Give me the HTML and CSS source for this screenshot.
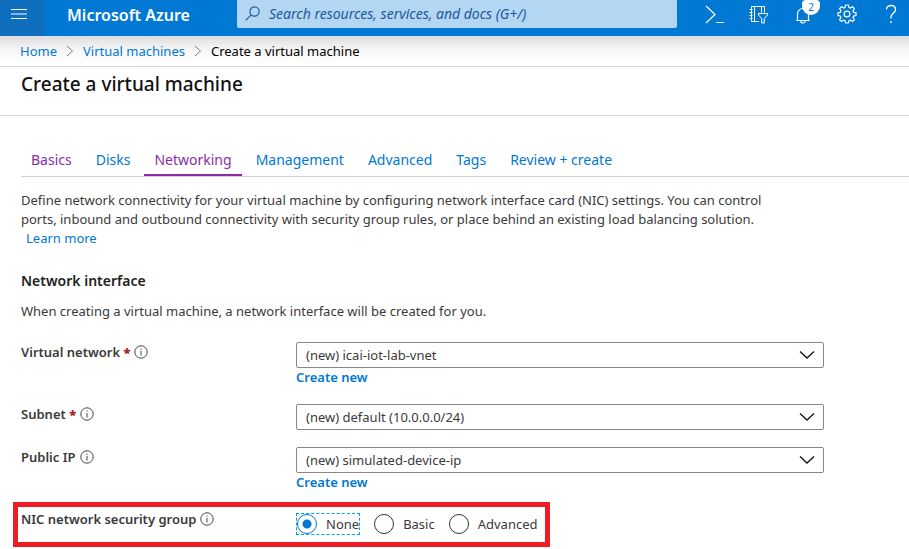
FILE: index.html
```html
<!DOCTYPE html>
<html lang="en">
<head>
<meta charset="utf-8">
<meta name="viewport" content="width=device-width, initial-scale=1">
<title>Create a virtual machine - Microsoft Azure</title>
<link rel="stylesheet" href="styles.css">
</head>
<body>
<svg class="defs" aria-hidden="true">
  <symbol id="info" viewBox="0 0 14 14"><circle cx="7" cy="7" r="6.2" fill="none" stroke="currentColor"/><path d="M7 6v4.500M7 3.500v1.200" stroke="currentColor" fill="none"/></symbol>
  <symbol id="chev" viewBox="0 0 16 10"><path d="M1 1.500l7 6.500 7-6.500" fill="none" stroke="#111" stroke-width="1.300"/></symbol>
  <symbol id="sep" viewBox="0 0 8 12"><path d="M1 1l5.500 5L1 11" fill="none" stroke="#777"/></symbol>
</svg>
<header class="topbar">
  <button class="menu" aria-label="Show portal menu"><svg width="16" height="12" viewBox="0 0 16 12"><path d="M0 1.500h16M0 10.500h16" stroke="#fff"/><path d="M0 6h16" stroke="#7fb6e6" stroke-width="2"/></svg></button>
  <a class="brand" href="#">Microsoft Azure</a>
  <div class="search">
    <svg width="15" height="15" viewBox="0 0 15 15"><circle cx="9.500" cy="5.500" r="4.600" fill="none" stroke="#1c5a99" stroke-width="1.200"/><path d="M6.200 8.800L.6 14.400" stroke="#1c5a99" stroke-width="1.200"/></svg>
    <input type="text" aria-label="Search" placeholder="Search resources, services, and docs (G+/)">
  </div>
  <nav class="tools" aria-label="Portal tools">
    <button aria-label="Cloud Shell"><svg width="20" height="20" viewBox="0 0 20 20"><path d="M1 2l9 8.500L1 19M11 18.500h8" fill="none" stroke="#fff" stroke-width="1.200"/></svg></button>
    <button aria-label="Directories and subscriptions"><svg width="20" height="20" viewBox="0 0 20 20" fill="none" stroke="#fff"><path d="M10 17.500H2.500v-15h13v6M5.500 2.500v15M12.500 2.500v6M.5 5.500h3M.5 8.500h3M.5 11.500h3M.5 14.500h3"/><path d="M9.500 9.500h9v1.500l-3.200 3.500v4.500h-2.600v-4.500L9.500 11z" fill="#0078d4"/></svg></button>
    <button aria-label="Notifications"><svg width="20" height="20" viewBox="0 0 20 20" fill="none" stroke="#fff" stroke-width="1.200"><path d="M3 16.500h14M4.500 16.500V10a5.500 5.500 0 0 1 11 0v6.500M7.800 17a2.200 2 0 0 0 4.400 0"/></svg><span class="badge">2</span></button>
    <button aria-label="Settings"><svg width="20" height="20" viewBox="0 0 20 20" fill="none" stroke="#fff" stroke-width="1.200" stroke-linejoin="round"><path d="M8.500 1h3l.4 2.500 1.500.6 2.100-1.500 2 2-1.500 2.100.6 1.600 2.400.3v3l-2.400.4-.6 1.500 1.500 2.100-2 2-2.100-1.500-1.500.6-.4 2.300h-3l-.4-2.300-1.500-.6-2.100 1.500-2-2L4 13.500 3.400 12 1 11.600v-3l2.400-.3.600-1.600-1.500-2.100 2-2 2.100 1.500 1.500-.6z"/><circle cx="10" cy="10" r="2.900"/></svg></button>
    <button aria-label="Help"><svg width="20" height="20" viewBox="0 0 20 20" fill="none" stroke="#fff" stroke-width="1.300"><path d="M5.500 5.500C5.500 3 7.500 1.500 10 1.500s4.500 1.500 4.500 4c0 3.500-4.500 4-4.500 7.500v1.500M10 17v2"/></svg></button>
  </nav>
</header>
<nav class="crumbs" aria-label="Breadcrumb">
  <a href="#">Home</a><svg width="8" height="12"><use href="#sep"/></svg><a href="#">Virtual machines</a><svg width="8" height="12"><use href="#sep"/></svg><span>Create a virtual machine</span>
</nav>
<div class="title"><h1>Create a virtual machine</h1></div>
<main>
  <nav class="tabs" aria-label="Steps">
    <a class="done" href="#">Basics</a><a href="#">Disks</a><a class="done active" href="#" aria-current="step">Networking</a><a href="#">Management</a><a href="#">Advanced</a><a href="#">Tags</a><a href="#">Review + create</a>
  </nav>
  <div class="content">
    <p class="intro">Define network connectivity for your virtual machine by configuring network interface card (NIC) settings. You can control ports, inbound and outbound connectivity with security group rules, or place behind an existing load balancing solution. <a href="#">Learn more</a></p>
    <h2>Network interface</h2>
    <p>When creating a virtual machine, a network interface will be created for you.</p>
    <form>
      <div class="row">
        <div class="label"><label for="vnet">Virtual network <b>*</b></label><svg width="14" height="14"><use href="#info"/></svg></div>
        <div class="field">
          <div class="pick"><select id="vnet"><option>(new) icai-iot-lab-vnet</option></select><svg width="16" height="10"><use href="#chev"/></svg></div>
          <a class="new" href="#">Create new</a>
        </div>
      </div>
      <div class="row">
        <div class="label"><label for="subnet">Subnet <b>*</b></label><svg width="14" height="14"><use href="#info"/></svg></div>
        <div class="field">
          <div class="pick"><select id="subnet"><option>(new) default (10.0.0.0/24)</option></select><svg width="16" height="10"><use href="#chev"/></svg></div>
        </div>
      </div>
      <div class="row">
        <div class="label"><label for="ip">Public IP</label><svg width="14" height="14"><use href="#info"/></svg></div>
        <div class="field">
          <div class="pick"><select id="ip"><option>(new) simulated-device-ip</option></select><svg width="16" height="10"><use href="#chev"/></svg></div>
          <a class="new" href="#">Create new</a>
        </div>
      </div>
      <div class="row marked" role="radiogroup" aria-labelledby="nsg">
        <div class="label"><span id="nsg">NIC network security group</span><svg width="14" height="14"><use href="#info"/></svg></div>
        <div class="radios">
          <label class="focused"><input type="radio" name="nsg" checked>None</label>
          <label><input type="radio" name="nsg">Basic</label>
          <label><input type="radio" name="nsg">Advanced</label>
        </div>
      </div>
    </form>
  </div>
</main>
</body>
</html>
```
FILE: styles.css
```css
* { box-sizing: border-box; }
body {
  margin: 0;
  background: #fff;
  color: #3b3a39;
  font: 13px/19px "Noto Sans", "Open Sans", sans-serif;
}
a { color: #0078d4; text-decoration: none; }
p, h1, h2 { margin: 0; }
button { border: 0; padding: 0; background: none; font: inherit; }
.defs { position: absolute; width: 0; height: 0; }

.topbar {
  display: flex;
  height: 36px;
  background: #0078d4;
}
.menu {
  width: 45px;
  padding: 0 8px 6px 0;
  background: #106ebe;
}
.brand {
  width: 192px;
  padding: 3px 0 0 22px;
  color: #fff;
  font-size: 16px;
  font-weight: 600;
  line-height: 24px;
  white-space: nowrap;
}
.search {
  display: flex;
  align-items: center;
  flex: 0 1 440px;
  height: 28px;
  padding: 0 8px 1px;
  gap: 9px;
  background: #b3d6f2;
  border-radius: 0 0 2px 2px;
}
.search svg { flex: none; }
.search input {
  flex: 1;
  min-width: 0;
  padding: 0;
  border: 0;
  background: none;
  font: italic 14px/20px "Noto Sans", sans-serif;
}
.search input::placeholder { color: #1c5a99; opacity: 1; }
.tools {
  display: flex;
  align-items: center;
  gap: 24px;
  height: 28px;
  margin-left: auto;
  padding-right: 8px;
}
.tools button { position: relative; width: 20px; height: 20px; }
.tools svg { display: block; }
.badge {
  position: absolute;
  left: 9px;
  top: -4px;
  width: 18px;
  height: 15px;
  border-radius: 4px 4px 9px 9px;
  background: #fff;
  color: #106ebe;
  font-size: 10px;
  line-height: 14px;
}

.crumbs {
  display: flex;
  align-items: center;
  gap: 9px;
  height: 31px;
  padding-left: 20px;
  border-bottom: 1px solid #d6d6d6;
  background: linear-gradient(#dcdcdc, #f4f4f4 40%, #fff 85%);
  color: #000;
}
.title {
  height: 49px;
  padding: 3px 21px 0;
  border-bottom: 1px solid #d6d6d6;
}
h1 { color: #111; font-size: 19px; font-weight: 500; line-height: 28px; }

main { padding: 33px 0 16px 21px; }
.tabs {
  display: flex;
  gap: 4px;
  border-bottom: 1px solid #d2d2d2;
}
.tabs a {
  padding: 0 10px 3px;
  border-bottom: 2px solid transparent;
  font-size: 14px;
  line-height: 22px;
}
.tabs .done { color: #8a2da5; }
.tabs .active { border-color: #8a2da5; }
.content { max-width: 803px; margin-right: 21px; padding-top: 14px; }
.intro { max-width: 768px; }
.intro a { display: block; width: fit-content; margin-left: 5px; }
h2 { margin: 23px 0 12px; font-size: 14px; font-weight: 600; line-height: 19px; color: #222; }

form { padding-top: 21px; }
.row {
  display: grid;
  grid-template-columns: 275px 1fr;
  margin-bottom: 17px;
}
.label { display: flex; align-items: center; gap: 4px; height: 20px; font-weight: 600; }
.label b { color: #a4262c; }
.label svg { color: #444; }
.pick { position: relative; }
.pick select {
  display: block;
  appearance: none;
  width: 100%;
  height: 26px;
  padding: 0 30px 0 9px;
  border: 1px solid #8a8886;
  border-radius: 2px;
  background: #fff;
  color: #3b3a39;
  font: inherit;
}
.pick svg { position: absolute; right: 9px; top: 8px; pointer-events: none; }
.new { display: block; width: fit-content; font-weight: 600; }
.marked {
  width: fit-content;
  margin: -7px 0 0 -8px;
  padding: 2px 7px 7px 3px;
  border: 5px solid #ee1c25;
  grid-template-columns: 275px auto;
}
.radios { display: flex; gap: 13px; height: 22px; margin-top: 4px; }
.radios label { display: flex; align-items: center; gap: 9px; }
.focused { padding-right: 1px; outline: 1px dashed #00a2ed; outline-offset: -1px; }
.radios input {
  appearance: none;
  width: 20px;
  height: 20px;
  margin: 0 0 0 1px;
  border: 1px solid #333;
  border-radius: 50%;
}
.radios input:checked {
  border-color: #0078d4;
  background: radial-gradient(circle, #0078d4 4px, transparent 5px);
}
```
